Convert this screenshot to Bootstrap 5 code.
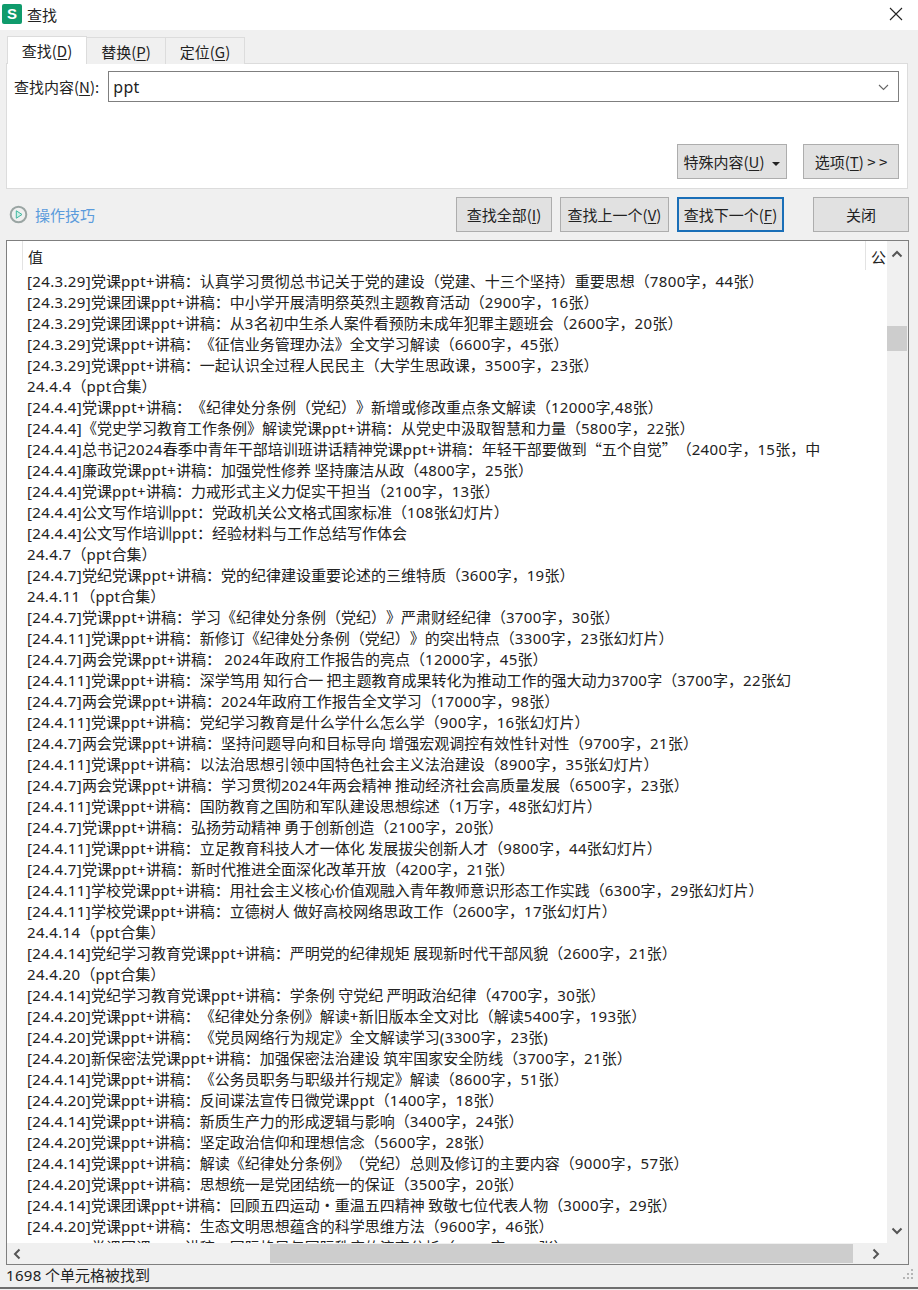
<!DOCTYPE html>
<html lang="zh-CN">
<head>
    <meta charset="UTF-8">
    <meta name="viewport" content="width=device-width, initial-scale=1.0">
    <title>查找</title>
    <link href="https://cdn.jsdelivr.net/npm/bootstrap@5.3.0/dist/css/bootstrap.min.css" rel="stylesheet">
    <style>
        html, body {
            height: 100%;
        }
        body {
            width: 918px;
            height: 1290px;
            overflow: hidden;
            background: #f0f0f0;
            color: #222;
            font-family: "Noto Sans CJK SC", "Noto Sans", sans-serif;
            font-size: 15px;
            line-height: 21px;
            text-spacing-trim: space-all;
        }
        u {
            text-underline-offset: 2px;
        }
        .latin {
            font-family: "Noto Sans", sans-serif;
            letter-spacing: 0.35px;
        }
        .title-bar {
            height: 30px;
            background: #fff;
            padding: 0 15px 2px 2px;
        }
        .app-logo {
            width: 20px;
            height: 20px;
            border-radius: 2px;
            background: #0f9b6c;
            color: #fff;
            font: bold 15px/20px "Liberation Sans", sans-serif;
            text-align: center;
            margin-right: 5px;
        }
        .dialog-tabs {
            height: 34px;
            padding: 7px 0 0 7px;
            margin: 0 0 -1px;
            border: 0;
            position: relative;
        }
        .dialog-tab {
            height: 27px;
            width: 79px;
            text-align: center;
            line-height: 27px;
            background: #f0f0f0;
            border: 1px solid #dcdcdc;
            border-left: 0;
            border-bottom: 0;
        }
        .dialog-tab.on {
            width: 80px;
            height: 28px;
            margin-top: -1px;
            background: #fff;
            border-left: 1px solid #dcdcdc;
        }
        .tab-panel {
            height: 126px;
            margin: 0 10px 0 6px;
            background: #fff;
            border: 1px solid #dcdcdc;
            padding: 7px 7px 0 7px;
        }
        .find-input {
            width: 791px;
            height: 31px;
            border: 1px solid #7f7f7f;
            padding: 2px 9px 0 4px;
            font-size: 16px;
            margin-left: 9px;
            line-height: 29px;
        }
        .panel-actions {
            margin-top: 42px;
            gap: 16px;
            padding-right: 1px;
        }
        .win-btn {
            height: 35px;
            background: #e1e1e1;
            border: 1px solid #adadad;
            color: #222;
            font-size: 15px;
            line-height: 21px;
            border-radius: 0;
            padding: 0;
        }
        .win-btn.focused {
            border: 2px solid #1a6fb8;
        }
        .caret-down {
            display: inline-block;
            width: 0;
            height: 0;
            margin-left: 8px;
            vertical-align: 2px;
            border-left: 4px solid transparent;
            border-right: 4px solid transparent;
            border-top: 4px solid #222;
        }
        .action-row {
            height: 51px;
            padding: 8px 9px 0 9px;
        }
        .tips-link {
            color: #5b9bdc;
            margin-left: 7px;
        }
        .result-box {
            position: relative;
            height: 1025px;
            margin: 0 9px 0 6px;
            background: #fff;
            border: 1px solid #7f7f7f;
            overflow: hidden;
        }
        .grid-area {
            height: 1002px;
            width: 880px;
            overflow: hidden;
        }
        .grid-head {
            height: 29px;
            padding-left: 15px;
            overflow: hidden;
        }
        .head-value {
            width: 844px;
            height: 29px;
            border-left: 1px solid #e3e3e3;
            border-right: 1px solid #e3e3e3;
            padding: 5px 0 0 5px;
        }
        .head-other {
            padding: 5px 0 0 5px;
        }
        .grid-row {
            height: 21px;
            padding-left: 20px;
            white-space: nowrap;
        }
        .v-bar {
            position: absolute;
            top: 0;
            right: 0;
            width: 21px;
            height: 1002px;
            background: #f0f0f0;
        }
        .v-thumb {
            position: absolute;
            top: 85px;
            left: 0;
            width: 20px;
            height: 25px;
            background: #cdcdcd;
        }
        .bar-arrow {
            position: absolute;
        }
        .h-bar {
            position: absolute;
            left: 0;
            right: 0;
            bottom: 0;
            height: 21px;
            background: #f0f0f0;
        }
        .h-thumb {
            position: absolute;
            top: 1px;
            left: 263px;
            width: 583px;
            height: 19px;
            background: #cdcdcd;
        }
        .status-bar {
            height: 24px;
            padding: 0 3px 3px 6px;
            position: relative;
            border-bottom: 2px solid #6e6e6e;
        }
    </style>
</head>
<body>
    <div class="title-bar d-flex align-items-center">
        <div class="app-logo">S</div>
        <div class="flex-grow-1">查找</div>
        <svg width="14" height="14" viewBox="0 0 14 14"><path d="M1 1 13 13M13 1 1 13" stroke="#222" stroke-width="1.1" fill="none"/></svg>
    </div>

    <div class="dialog-tabs d-flex">
        <div class="dialog-tab on">查找(<u>D</u>)</div>
        <div class="dialog-tab">替换(<u>P</u>)</div>
        <div class="dialog-tab">定位(<u>G</u>)</div>
    </div>
    <div class="tab-panel">
        <div class="d-flex align-items-center">
            <div>查找内容(<u>N</u>):</div>
            <div class="find-input d-flex align-items-center justify-content-between">
                <span class="latin">ppt</span>
                <svg width="11" height="7" viewBox="0 0 11 7"><path d="M1 1 5.5 5.5 10 1" stroke="#666" stroke-width="1.1" fill="none"/></svg>
            </div>
        </div>
        <div class="panel-actions d-flex justify-content-end">
            <button class="btn win-btn" style="width:110px">特殊内容(<u>U</u>)<span class="caret-down"></span></button>
            <button class="btn win-btn" style="width:96px">选项(<u>T</u>) &gt; &gt;</button>
        </div>
    </div>

    <div class="action-row d-flex align-items-start">
        <div class="d-flex align-items-center" style="height:35px">
            <svg width="19" height="19" viewBox="0 0 19 19"><circle cx="9.5" cy="9.5" r="7.8" fill="none" stroke="#9aa5a3" stroke-width="2"/><path d="M7.3 5.8 13 9.5 7.3 13.2Z" fill="#cfeee6" stroke="#3fb8a0" stroke-width="1"/></svg>
            <span class="tips-link">操作技巧</span>
        </div>
        <div class="ms-auto d-flex">
            <button class="btn win-btn" style="width:96px">查找全部(<u>I</u>)</button>
            <button class="btn win-btn ms-2" style="width:109px">查找上一个(<u>V</u>)</button>
            <button class="btn win-btn focused ms-2" style="width:107px">查找下一个(<u>F</u>)</button>
            <button class="btn win-btn" style="width:96px;margin-left:29px">关闭</button>
        </div>
    </div>

    <div class="result-box">
        <div class="grid-area">
            <div class="grid-head d-flex">
                <div class="head-value">值</div>
                <div class="head-other">公</div>
            </div>
            <div id="rows"></div>
        </div>
        <div class="v-bar">
            <svg class="bar-arrow" style="top:9px;left:4px" width="12" height="8" viewBox="0 0 12 8"><path d="M1.5 6.5 6 2 10.5 6.5" stroke="#555" stroke-width="2" fill="none"/></svg>
            <div class="v-thumb"></div>
            <svg class="bar-arrow" style="top:986px;left:4px" width="12" height="8" viewBox="0 0 12 8"><path d="M1.5 1.5 6 6 10.5 1.5" stroke="#555" stroke-width="2" fill="none"/></svg>
        </div>
        <div class="h-bar">
            <svg class="bar-arrow" style="top:5px;left:6px" width="8" height="12" viewBox="0 0 8 12"><path d="M6.5 1.5 2 6 6.5 10.5" stroke="#555" stroke-width="2" fill="none"/></svg>
            <div class="h-thumb"></div>
            <svg class="bar-arrow" style="top:5px;left:865px" width="8" height="12" viewBox="0 0 8 12"><path d="M1.5 1.5 6 6 1.5 10.5" stroke="#555" stroke-width="2" fill="none"/></svg>
        </div>
    </div>

    <div class="status-bar d-flex align-items-center justify-content-between">
        <span><span class="latin">1698</span> 个单元格被找到</span>
        <svg width="12" height="12" viewBox="0 0 12 12" fill="#b5b5b5"><rect x="8" y="0" width="2" height="2"/><rect x="4" y="4" width="2" height="2"/><rect x="8" y="4" width="2" height="2"/><rect x="0" y="8" width="2" height="2"/><rect x="4" y="8" width="2" height="2"/><rect x="8" y="8" width="2" height="2"/></svg>
    </div>

    <script src="https://cdn.jsdelivr.net/npm/bootstrap@5.3.0/dist/js/bootstrap.bundle.min.js"></script>
    <script>
        const results = [
            '[24.3.29]党课ppt+讲稿：认真学习贯彻总书记关于党的建设（党建、十三个坚持）重要思想（7800字，44张）',
            '[24.3.29]党课团课ppt+讲稿：中小学开展清明祭英烈主题教育活动（2900字，16张）',
            '[24.3.29]党课团课ppt+讲稿：从3名初中生杀人案件看预防未成年犯罪主题班会（2600字，20张）',
            '[24.3.29]党课ppt+讲稿：《征信业务管理办法》全文学习解读（6600字，45张）',
            '[24.3.29]党课ppt+讲稿：一起认识全过程人民民主（大学生思政课，3500字，23张）',
            '24.4.4（ppt合集）',
            '[24.4.4]党课ppt+讲稿：《纪律处分条例（党纪）》新增或修改重点条文解读（12000字,48张）',
            '[24.4.4]《党史学习教育工作条例》解读党课ppt+讲稿：从党史中汲取智慧和力量（5800字，22张）',
            '[24.4.4]总书记2024春季中青年干部培训班讲话精神党课ppt+讲稿：年轻干部要做到“五个自觉”（2400字，15张，中',
            '[24.4.4]廉政党课ppt+讲稿：加强党性修养 坚持廉洁从政（4800字，25张）',
            '[24.4.4]党课ppt+讲稿：力戒形式主义力促实干担当（2100字，13张）',
            '[24.4.4]公文写作培训ppt：党政机关公文格式国家标准（108张幻灯片）',
            '[24.4.4]公文写作培训ppt：经验材料与工作总结写作体会',
            '24.4.7（ppt合集）',
            '[24.4.7]党纪党课ppt+讲稿：党的纪律建设重要论述的三维特质（3600字，19张）',
            '24.4.11（ppt合集）',
            '[24.4.7]党课ppt+讲稿：学习《纪律处分条例（党纪）》严肃财经纪律（3700字，30张）',
            '[24.4.11]党课ppt+讲稿：新修订《纪律处分条例（党纪）》的突出特点（3300字，23张幻灯片）',
            '[24.4.7]两会党课ppt+讲稿： 2024年政府工作报告的亮点（12000字，45张）',
            '[24.4.11]党课ppt+讲稿：深学笃用 知行合一 把主题教育成果转化为推动工作的强大动力3700字（3700字，22张幻',
            '[24.4.7]两会党课ppt+讲稿：2024年政府工作报告全文学习（17000字，98张）',
            '[24.4.11]党课ppt+讲稿：党纪学习教育是什么学什么怎么学（900字，16张幻灯片）',
            '[24.4.7]两会党课ppt+讲稿：坚持问题导向和目标导向 增强宏观调控有效性针对性（9700字，21张）',
            '[24.4.11]党课ppt+讲稿：以法治思想引领中国特色社会主义法治建设（8900字，35张幻灯片）',
            '[24.4.7]两会党课ppt+讲稿：学习贯彻2024年两会精神 推动经济社会高质量发展（6500字，23张）',
            '[24.4.11]党课ppt+讲稿：国防教育之国防和军队建设思想综述（1万字，48张幻灯片）',
            '[24.4.7]党课ppt+讲稿：弘扬劳动精神 勇于创新创造（2100字，20张）',
            '[24.4.11]党课ppt+讲稿：立足教育科技人才一体化 发展拔尖创新人才（9800字，44张幻灯片）',
            '[24.4.7]党课ppt+讲稿：新时代推进全面深化改革开放（4200字，21张）',
            '[24.4.11]学校党课ppt+讲稿：用社会主义核心价值观融入青年教师意识形态工作实践（6300字，29张幻灯片）',
            '[24.4.11]学校党课ppt+讲稿：立德树人 做好高校网络思政工作（2600字，17张幻灯片）',
            '24.4.14（ppt合集）',
            '[24.4.14]党纪学习教育党课ppt+讲稿：严明党的纪律规矩 展现新时代干部风貌（2600字，21张）',
            '24.4.20（ppt合集）',
            '[24.4.14]党纪学习教育党课ppt+讲稿：学条例 守党纪 严明政治纪律（4700字，30张）',
            '[24.4.20]党课ppt+讲稿：《纪律处分条例》解读+新旧版本全文对比（解读5400字，193张）',
            '[24.4.20]党课ppt+讲稿：《党员网络行为规定》全文解读学习(3300字，23张)',
            '[24.4.20]新保密法党课ppt+讲稿：加强保密法治建设 筑牢国家安全防线（3700字，21张）',
            '[24.4.14]党课ppt+讲稿：《公务员职务与职级并行规定》解读（8600字，51张）',
            '[24.4.20]党课ppt+讲稿：反间谍法宣传日微党课ppt（1400字，18张）',
            '[24.4.14]党课ppt+讲稿：新质生产力的形成逻辑与影响（3400字，24张）',
            '[24.4.20]党课ppt+讲稿：坚定政治信仰和理想信念（5600字，28张）',
            '[24.4.14]党课ppt+讲稿：解读《纪律处分条例》（党纪）总则及修订的主要内容（9000字，57张）',
            '[24.4.20]党课ppt+讲稿：思想统一是党团结统一的保证（3500字，20张）',
            '[24.4.14]党课团课ppt+讲稿：回顾五四运动·重温五四精神 致敬七位代表人物（3000字，29张）',
            '[24.4.20]党课ppt+讲稿：生态文明思想蕴含的科学思维方法（9600字，46张）',
            '[24.4.14]党课团课ppt+讲稿：国际格局与国际秩序的演变分析（3000字，29张）'
        ];

        const rowsEl = document.getElementById('rows');
        results.forEach((text) => {
            const row = document.createElement('div');
            row.className = 'grid-row';
            // latin runs get their own font, the CJK font's digits are too narrow here
            row.innerHTML = text.replace(/[\x21-\x7e]+/g, '<span class="latin">$&</span>');
            rowsEl.appendChild(row);
        });
    </script>
</body>
</html>
